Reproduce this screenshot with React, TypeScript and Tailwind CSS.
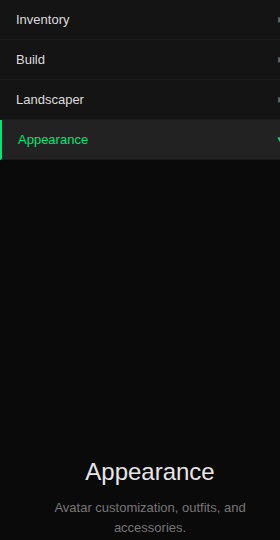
import React from "react";

const items = ["Inventory", "Build", "Landscaper", "Appearance"];

export default function App() {
  const active = "Appearance";
  return (
    <div
      className="w-[280px] h-[540px] overflow-hidden bg-[#0a0a0a]"
      style={{ fontFamily: '"Liberation Sans", Arial, sans-serif' }}
    >
      <div className="w-[300px] h-[540px] flex flex-col">
        <nav className="flex flex-col">
          {items.map((it) => {
            const isActive = it === active;
            return (
              <div
                key={it}
                className={
                  isActive
                    ? "h-10 flex items-center justify-between pl-[16px] pr-4 bg-[#222222] border-l-2 border-[#00e676] border-b border-b-[#1c1c1c]"
                    : "h-10 flex items-center justify-between pl-4 pr-4 bg-[#141414] border-b border-[#1c1c1c]"
                }
              >
                <span
                  className={
                    isActive
                      ? "text-[13px] text-[#00e676]"
                      : "text-[13px] text-[#dddddd]"
                  }
                >
                  {it}
                </span>
                <span
                  className={
                    isActive
                      ? "text-[8px] text-[#00e676] leading-none"
                      : "text-[8px] text-[#666666] leading-none"
                  }
                >
                  {isActive ? "▼" : "▶"}
                </span>
              </div>
            );
          })}
        </nav>
        <div className="flex-1 flex flex-col items-center justify-end pb-[2px] px-10 text-center">
          <h1 className="text-[24px] leading-8 text-[#e6e6e6] font-normal">
            Appearance
          </h1>
          <p className="mt-[10px] text-[13px] leading-5 text-[#777777]">
            Avatar customization, outfits, and accessories.
          </p>
        </div>
      </div>
    </div>
  );
}
